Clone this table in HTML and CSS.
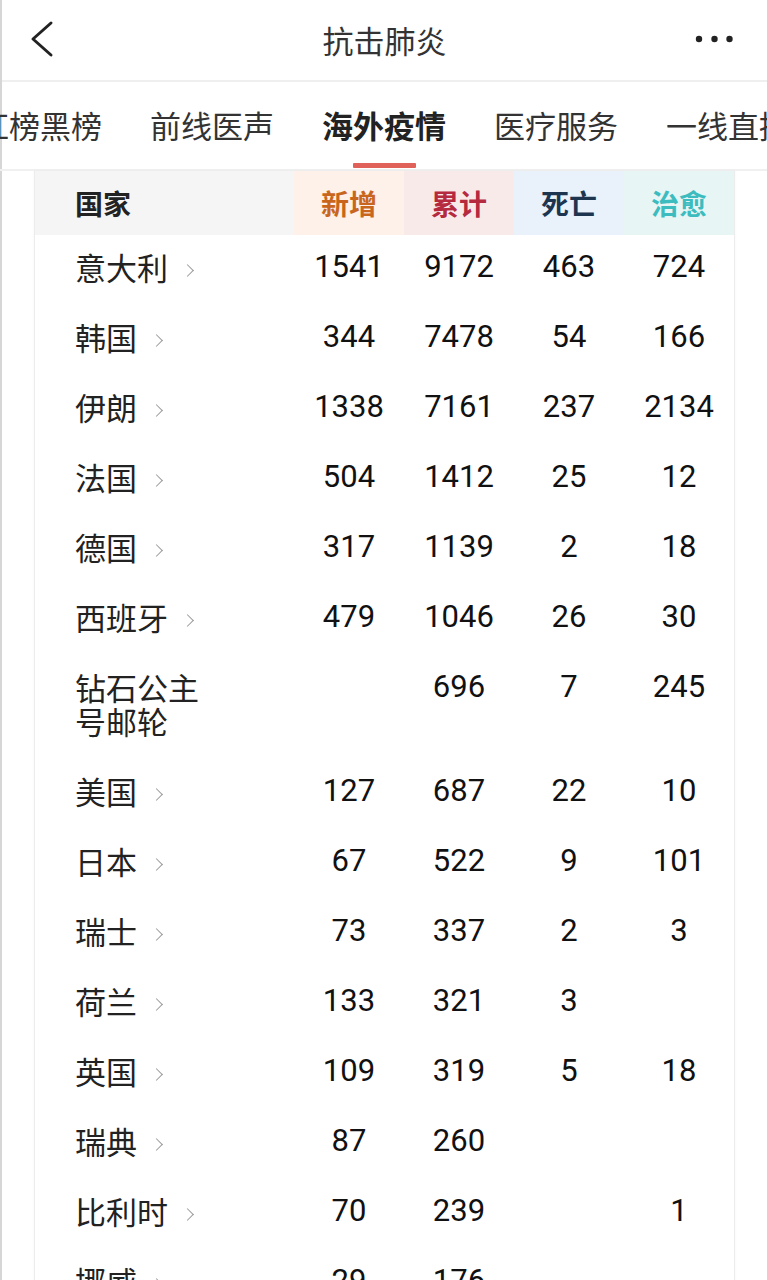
FILE: index.html
```html
<!DOCTYPE html>
<html lang="zh-CN">
<head>
<meta charset="utf-8">
<title>抗击肺炎</title>
<link rel="stylesheet" href="styles.css">
</head>
<body>
<div class="page">
  <header class="nav">
    <div class="nav-left">
      <svg class="back" width="24" height="40" viewBox="0 0 24 40"><path d="M21 3 L3 19 L21 35" fill="none" stroke="#222" stroke-width="3" stroke-linecap="round" stroke-linejoin="round"/></svg>
    </div>
    <div class="nav-title">抗击肺炎</div>
    <div class="nav-right">
      <svg class="more" width="38" height="8" viewBox="0 0 38 8"><circle cx="4" cy="4" r="3.2" fill="#222"/><circle cx="19.5" cy="4" r="3.2" fill="#222"/><circle cx="34.5" cy="4" r="3.2" fill="#222"/></svg>
    </div>
  </header>

  <nav class="tabs">
    <div class="tab">红榜黑榜</div>
    <div class="tab">前线医声</div>
    <div class="tab active">海外疫情</div>
    <div class="tab">医疗服务</div>
    <div class="tab">一线直播</div>
  </nav>

  <section class="card">
    <div class="row head">
      <div class="cell country">国家</div>
      <div class="cell h-new">新增</div>
      <div class="cell h-total">累计</div>
      <div class="cell h-dead">死亡</div>
      <div class="cell h-cured">治愈</div>
    </div>

    <div class="row"><div class="cell country"><span class="name">意大利</span><i class="chev"></i></div><div class="cell num">1541</div><div class="cell num">9172</div><div class="cell num">463</div><div class="cell num">724</div></div>
    <div class="row"><div class="cell country"><span class="name">韩国</span><i class="chev"></i></div><div class="cell num">344</div><div class="cell num">7478</div><div class="cell num">54</div><div class="cell num">166</div></div>
    <div class="row"><div class="cell country"><span class="name">伊朗</span><i class="chev"></i></div><div class="cell num">1338</div><div class="cell num">7161</div><div class="cell num">237</div><div class="cell num">2134</div></div>
    <div class="row"><div class="cell country"><span class="name">法国</span><i class="chev"></i></div><div class="cell num">504</div><div class="cell num">1412</div><div class="cell num">25</div><div class="cell num">12</div></div>
    <div class="row"><div class="cell country"><span class="name">德国</span><i class="chev"></i></div><div class="cell num">317</div><div class="cell num">1139</div><div class="cell num">2</div><div class="cell num">18</div></div>
    <div class="row"><div class="cell country"><span class="name">西班牙</span><i class="chev"></i></div><div class="cell num">479</div><div class="cell num">1046</div><div class="cell num">26</div><div class="cell num">30</div></div>
    <div class="row"><div class="cell country"><span class="name narrow">钻石公主号邮轮</span></div><div class="cell num"></div><div class="cell num">696</div><div class="cell num">7</div><div class="cell num">245</div></div>
    <div class="row"><div class="cell country"><span class="name">美国</span><i class="chev"></i></div><div class="cell num">127</div><div class="cell num">687</div><div class="cell num">22</div><div class="cell num">10</div></div>
    <div class="row"><div class="cell country"><span class="name">日本</span><i class="chev"></i></div><div class="cell num">67</div><div class="cell num">522</div><div class="cell num">9</div><div class="cell num">101</div></div>
    <div class="row"><div class="cell country"><span class="name">瑞士</span><i class="chev"></i></div><div class="cell num">73</div><div class="cell num">337</div><div class="cell num">2</div><div class="cell num">3</div></div>
    <div class="row"><div class="cell country"><span class="name">荷兰</span><i class="chev"></i></div><div class="cell num">133</div><div class="cell num">321</div><div class="cell num">3</div><div class="cell num"></div></div>
    <div class="row"><div class="cell country"><span class="name">英国</span><i class="chev"></i></div><div class="cell num">109</div><div class="cell num">319</div><div class="cell num">5</div><div class="cell num">18</div></div>
    <div class="row"><div class="cell country"><span class="name">瑞典</span><i class="chev"></i></div><div class="cell num">87</div><div class="cell num">260</div><div class="cell num"></div><div class="cell num"></div></div>
    <div class="row"><div class="cell country"><span class="name">比利时</span><i class="chev"></i></div><div class="cell num">70</div><div class="cell num">239</div><div class="cell num"></div><div class="cell num">1</div></div>
    <div class="row"><div class="cell country"><span class="name">挪威</span><i class="chev"></i></div><div class="cell num">29</div><div class="cell num">176</div><div class="cell num"></div><div class="cell num"></div></div>
  </section>
</div>
</body>
</html>
```

FILE: styles.css
```css
html, body {
  margin: 0;
  padding: 0;
  background: #fff;
  overflow: hidden;
}
body {
  font-family: "Noto Sans CJK SC", "Noto Sans", sans-serif;
  color: #222;
}
.page {
  border-left: 2px solid #d6d6d6;
  min-height: 1280px;
  box-sizing: border-box;
}

/* top navigation */
.nav {
  height: 80px;
  border-bottom: 2px solid #efefef;
  display: grid;
  grid-template-columns: 1fr auto 1fr;
  align-items: center;
}
.nav-left {
  padding-left: 28px;
  display: flex;
  align-items: center;
}
.back { display: block; }
.nav-title {
  font-size: 31px;
  line-height: 40px;
  color: #333;
}
.nav-right {
  display: flex;
  justify-content: flex-end;
  padding-right: 34px;
}
.more { display: block; margin-top: -2px; }

/* tabs */
.tabs {
  height: 87px;
  border-bottom: 2px solid #f0f0f0;
  display: flex;
  gap: 48px;
  margin-left: -24px;
  overflow: hidden;
  white-space: nowrap;
}
.tab {
  display: flex;
  flex-direction: column;
  align-items: center;
  padding-top: 27px;
  font-size: 31px;
  line-height: 32px;
  color: #333;
  flex: none;
}
.tab.active {
  font-weight: 700;
  color: #222;
}
.tab.active::after {
  content: "";
  display: block;
  width: 63px;
  height: 5px;
  margin-top: 22px;
  background: #e0605a;
  border-radius: 1px;
}

/* table card */
.card {
  margin: 0 32px;
  border-left: 1px solid #ececec;
  border-right: 1px solid #ececec;
  box-shadow: 0 0 3px rgba(0,0,0,0.04);
}
.row {
  display: grid;
  grid-template-columns: 1fr 110px 110px 110px 110px;
}
.cell {
  padding: 15px 0 21px;
  line-height: 34px;
  text-align: center;
}
.country {
  text-align: left;
  padding-left: 40px;
  display: flex;
  align-items: flex-start;
}
.name {
  font-size: 31px;
  color: #222;
}
.name.narrow { max-width: 130px; }
.chev {
  display: inline-block;
  width: 8px;
  height: 8px;
  border-top: 1.6px solid #9a9a9a;
  border-right: 1.6px solid #9a9a9a;
  transform: rotate(45deg);
  margin: 16px 0 0 15px;
}
.num {
  font-family: Roboto, "Noto Sans", sans-serif;
  font-size: 31px;
  font-weight: 400;
  color: #111;
}

/* header */
.head .cell {
  height: 64px;
  box-sizing: border-box;
  padding: 0;
  display: flex;
  align-items: center;
  justify-content: center;
  font-size: 28px;
  font-weight: 700;
}
.head .country {
  justify-content: flex-start;
  padding-left: 40px;
  background: #f5f5f5;
  color: #222;
}
.h-new { background: #fdf1ea; color: #c9661e; }
.h-total { background: #f9eaea; color: #b52a3e; }
.h-dead { background: #e9f1fb; color: #1e3550; }
.h-cured { background: #e7f5f5; color: #3dbcbf; }
```
